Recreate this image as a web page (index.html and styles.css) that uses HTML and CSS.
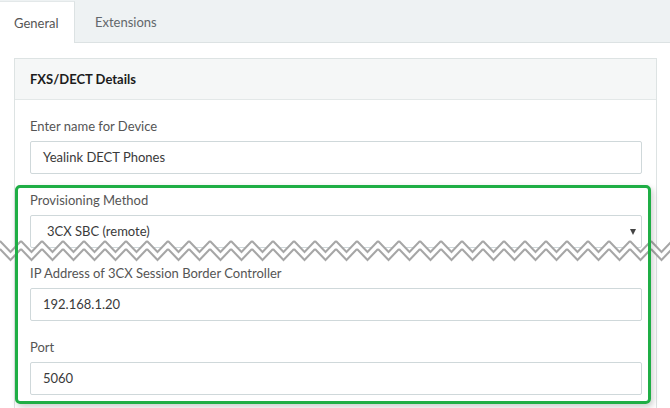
FILE: index.html
```html
<!DOCTYPE html>
<html lang="en">
  <head>
    <meta charset="UTF-8" />
    <title>FXS/DECT Details</title>
    <link rel="stylesheet" href="styles.css">
  </head>
  <body>
    <div class="tabs">
      <div class="tab active">General</div>
      <div class="tab">Extensions</div>
    </div>

    <div class="content">
      <div class="panel">
        <div class="panel-header">FXS/DECT Details</div>
        <div class="panel-body">
          <div class="form-group">
            <label>Enter name for Device</label>
            <div class="field">Yealink DECT Phones</div>
          </div>
          <div class="form-group">
            <label>Provisioning Method</label>
            <div class="field select">3CX SBC (remote)<span class="caret"></span></div>
          </div>
          <div class="form-group">
            <label>IP Address of 3CX Session Border Controller</label>
            <div class="field">192.168.1.20</div>
          </div>
          <div class="form-group">
            <label>Port</label>
            <div class="field">5060</div>
          </div>
        </div>

        <!-- highlight box drawn over the form -->
        <div class="highlight"></div>
      </div>
    </div>

    <!-- torn edge -->
    <svg class="tear" width="670" height="26" xmlns="http://www.w3.org/2000/svg">
      <defs>
        <pattern id="zig" width="21" height="26" patternUnits="userSpaceOnUse">
          <polygon points="0,2 10.5,13 21,2 21,10 10.5,21 0,10" fill="#fff" />
          <polyline points="0,2 10.5,13 21,2" fill="none" stroke="#a6a6a6" stroke-width="2" />
          <polyline points="0,10 10.5,21 21,10" fill="none" stroke="#a6a6a6" stroke-width="2" />
        </pattern>
      </defs>
      <rect x="0" y="0" width="670" height="26" fill="url(#zig)" />
    </svg>
  </body>
</html>
```

FILE: styles.css
```css
body {
  font-family: Lato, "Open Sans", Arial, sans-serif;
  margin: 0;
  padding: 0;
  width: 670px;
  height: 408px;
  overflow: hidden;
  position: relative;
  background-color: white;
  color: #333;
}

.tabs {
  display: flex;
  height: 42px;
  background-color: #eef2f3;
  border-bottom: 1px solid #dce2e3;
}

.tab {
  padding: 0 14px;
  margin-top: 1px;
  line-height: 42px;
  font-size: 13px;
  color: #62676b;
}

.tab + .tab {
  padding-left: 20px;
}

.tab.active {
  width: 46px;
  background-color: white;
  border-right: 1px solid #dce2e3;
  border-top: 1px solid #e3e8e9;
  margin-bottom: -1px;
  color: #555;
}

.content {
  padding: 15px 13px 0 14px;
}

.panel {
  position: relative;
  border: 1px solid #dde3e3;
  border-bottom: none;
  height: 349px;
}

.panel-header {
  height: 40px;
  line-height: 40px;
  padding: 0 15px;
  background-color: #f5f7f7;
  border-bottom: 1px solid #e3e8e8;
  font-size: 13px;
  font-weight: 700;
  color: #1c1c1c;
}

.panel-body {
  padding: 16px 14px 0 15px;
}

.form-group {
  margin-bottom: 15.5px;
}

.form-group label {
  display: block;
  height: 20px;
  line-height: 20px;
  margin-bottom: 5px;
  font-size: 13px;
  color: #555;
}

.field {
  position: relative;
  height: 31px;
  line-height: 31px;
  padding: 0 12px;
  border: 1px solid #cfd8da;
  border-radius: 2px;
  font-size: 13px;
  color: #3a3a3a;
}

.field.select {
  padding-left: 16px;
}

.caret {
  position: absolute;
  right: 5px;
  top: 13px;
  width: 0;
  height: 0;
  border-left: 3.5px solid transparent;
  border-right: 3.5px solid transparent;
  border-top: 6px solid #444;
}

.highlight {
  position: absolute;
  left: 0;
  top: 126px;
  width: 630px;
  height: 213px;
  border: 3px solid #1fae45;
  border-radius: 5px;
  box-shadow: 2px 3px 6px rgba(0, 0, 0, 0.2);
  z-index: 2;
}

.tear {
  position: absolute;
  left: 0;
  top: 239px;
  z-index: 1;
}
```
